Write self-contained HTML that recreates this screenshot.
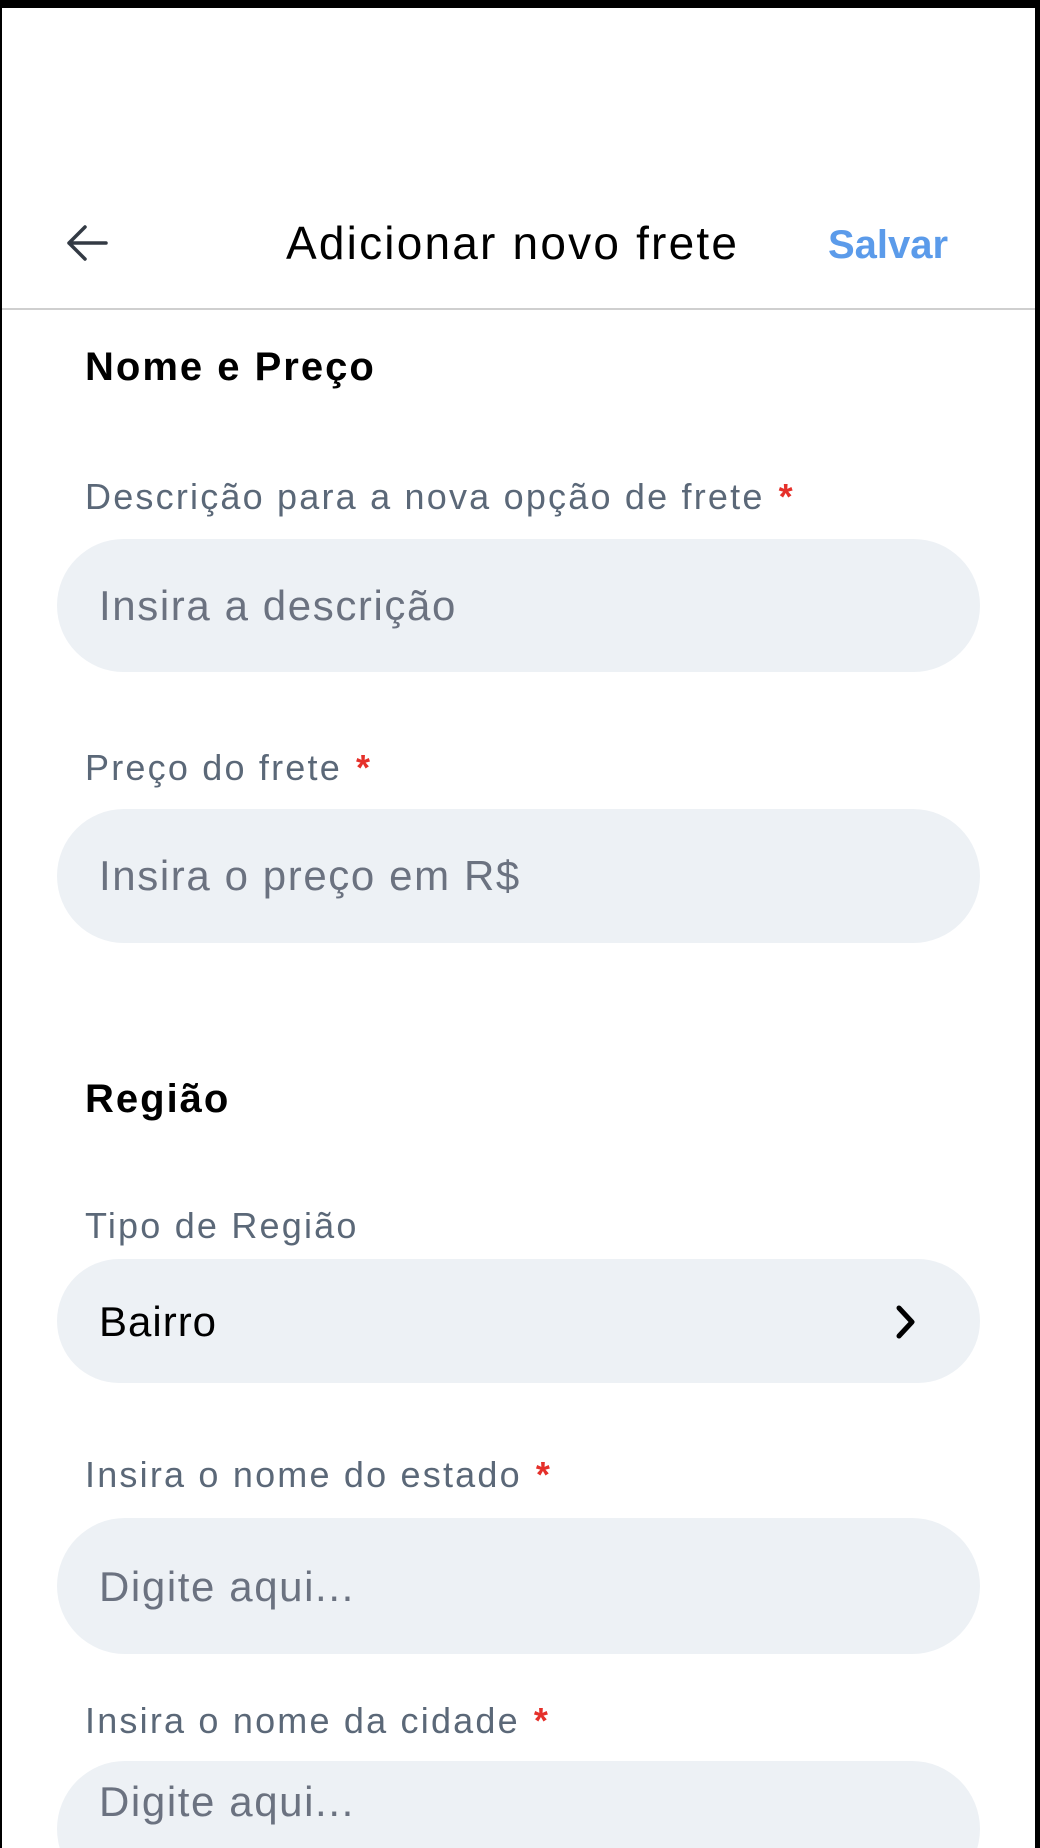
<!DOCTYPE html>
<html><head><meta charset="utf-8"><style>
*{margin:0;padding:0;box-sizing:border-box}
body{width:1040px;height:1848px;background:#000;overflow:hidden;font-family:"Liberation Sans",sans-serif;position:relative}
.page{position:absolute;left:2px;top:8px;width:1033px;height:1840px;background:#fff;overflow:hidden}
.a{position:absolute;white-space:nowrap;line-height:1}
.lbl{font-size:36px;letter-spacing:2.2px;color:#5b6878;left:83px}
.star{color:#e5302a;font-weight:bold;margin-left:14px}
.h{font-size:40px;letter-spacing:2px;font-weight:bold;color:#000;left:83px}
.inp{position:absolute;left:55px;width:923px;background:#edf1f5;border-radius:70px}
.ph{font-size:42px;letter-spacing:1.6px;color:#6b7280;left:97px}
</style></head><body><div class="page">
<svg class="a" style="left:62px;top:212px" width="46" height="46" viewBox="0 0 46 46"><path d="M42 23H5M21 7L5 23l16 16" fill="none" stroke="#333a44" stroke-width="3.5" stroke-linecap="round" stroke-linejoin="round"/></svg>
<div class="a" style="left:284px;top:212px;font-size:46px;letter-spacing:2.2px;color:#000">Adicionar novo frete</div>
<div class="a" style="left:826px;top:217px;font-size:40px;font-weight:bold;color:#5b9bea">Salvar</div>
<div class="a" style="left:0;top:300px;width:1033px;height:2px;background:#cfcfcf"></div>
<div class="a h" style="top:339px">Nome e Preço</div>
<div class="a lbl" style="top:471px">Descrição para a nova opção de frete<span class="star">*</span></div>
<div class="inp" style="top:531px;height:133px"></div>
<div class="a ph" style="top:577px">Insira a descrição</div>
<div class="a lbl" style="top:742px">Preço do frete<span class="star">*</span></div>
<div class="inp" style="top:801px;height:134px"></div>
<div class="a ph" style="top:847px">Insira o preço em R$</div>
<div class="a h" style="top:1071px">Região</div>
<div class="a lbl" style="top:1200px">Tipo de Região</div>
<div class="inp" style="top:1251px;height:124px"></div>
<div class="a" style="left:97px;top:1293px;font-size:42px;letter-spacing:1px;color:#000">Bairro</div>
<svg class="a" style="left:892px;top:1294px" width="24" height="40" viewBox="0 0 24 40"><path d="M5 6l13 14L5 34" fill="none" stroke="#000" stroke-width="5" stroke-linecap="round" stroke-linejoin="round"/></svg>
<div class="a lbl" style="top:1449px">Insira o nome do estado<span class="star">*</span></div>
<div class="inp" style="top:1510px;height:136px"></div>
<div class="a ph" style="top:1558px">Digite aqui...</div>
<div class="a lbl" style="top:1695px">Insira o nome da cidade<span class="star">*</span></div>
<div class="inp" style="top:1753px;height:136px"></div>
<div class="a ph" style="top:1773px">Digite aqui...</div>
</div></body></html>
